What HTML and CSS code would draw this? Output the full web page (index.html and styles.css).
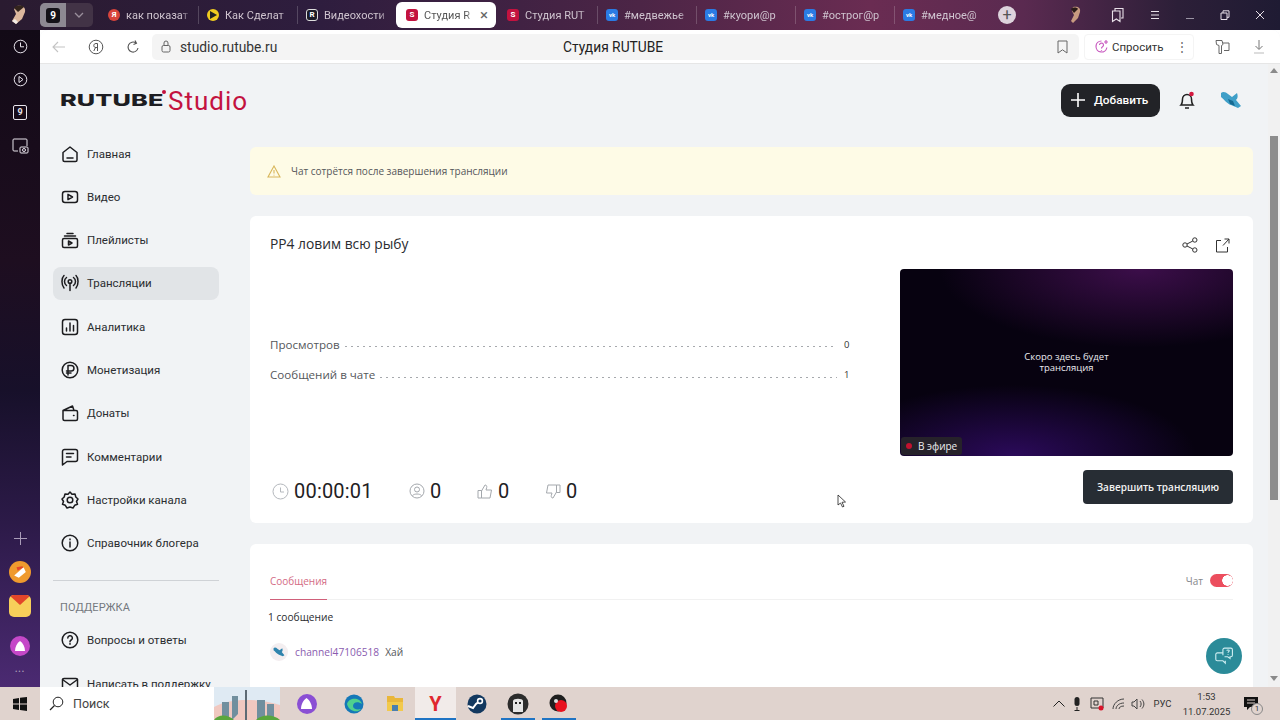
FILE: index.html
```html
<!DOCTYPE html>
<html lang="ru">
<head>
<meta charset="utf-8">
<title>Студия RUTUBE</title>
<link rel="stylesheet" href="styles.css">
</head>
<body>
<div class="desktop">
  <header class="tabbar">
    <div class="profile"><svg width="22" height="22" viewBox="0 0 22 22"><path d="M8 2c5-1 9 1 8 6l-3 7-6 5-4-3 4-7-2-5z" fill="#dcb79d"/><path d="M5 4c2-3 8-3 10-1l-6 5z" fill="#33241c"/><path d="M3 17l4 3 2-2-3-3z" fill="#f2ece6"/></svg></div>
    <div class="tabgroup"><span class="count"><b>9</b></span><svg class="chev" width="10" height="6" viewBox="0 0 10 6"><path d="M1 1l4 4 4-4" fill="none" stroke="#9a8f9c" stroke-width="1.3"/></svg></div>
    <div class="tab sep"><span class="fav round yandex">Я</span><span class="tabtext">как показат</span></div>
    <div class="tab sep"><span class="fav round yellow"><svg width="8" height="8" viewBox="0 0 8 8"><path d="M1 0l7 4-7 4z" fill="#222"/></svg></span><span class="tabtext">Как Сделат</span></div>
    <div class="tab"><span class="fav dark">R</span><span class="tabtext">Видеохости</span></div>
    <div class="tab active"><span class="fav crimson">S</span><span class="tabtext">Студия R</span><span class="close">×</span></div>
    <div class="tab sep"><span class="fav crimson">S</span><span class="tabtext">Студия RUT</span></div>
    <div class="tab sep"><span class="fav vk">vk</span><span class="tabtext">#медвежье</span></div>
    <div class="tab sep"><span class="fav vk">vk</span><span class="tabtext">#куори@р</span></div>
    <div class="tab sep"><span class="fav vk">vk</span><span class="tabtext">#острог@р</span></div>
    <div class="tab"><span class="fav vk">vk</span><span class="tabtext">#медное@</span></div>
    <div class="newtab">+</div>
    <div class="winctl">
      <svg width="18" height="18" viewBox="0 0 18 18"><path d="M5 1c4-1 8 0 7 5l-2 6-5 5-2-2 3-6-2-4z" fill="#c89b80"/><path d="M3 3c2-2 6-2 7 0l-4 4z" fill="#2a1c18"/></svg>
      <svg width="14" height="16" viewBox="0 0 14 16"><path d="M4 4V1.500h8V11h-2M1.500 4h7.500v10.500L5.300 12 1.500 14.500z" fill="none" stroke="#e8e0e8" stroke-width="1.100"/></svg>
      <svg width="10" height="10" viewBox="0 0 10 10"><path d="M1 1.500h8M1 5h8M1 8.500h8" stroke="#e8e0e8"/></svg>
      <svg width="10" height="10" viewBox="0 0 10 10"><path d="M1 8.500h8" stroke="#9a94a4"/></svg>
      <svg width="10" height="10" viewBox="0 0 10 10"><path d="M1 3h6v6.500H1zM3 3V.800h6v6.500H7" fill="none" stroke="#e8e0e8"/></svg>
      <svg width="10" height="10" viewBox="0 0 10 10"><path d="M1 1l8 8M9 1l-8 8" stroke="#e8e0e8"/></svg>
    </div>
  </header>

  <div class="middle">
    <nav class="rail">
      <div class="railtop">
        <svg width="15" height="15" viewBox="0 0 15 15"><circle cx="7.500" cy="7.500" r="6.300" fill="none" stroke="#e8e4ec"/><path d="M7.500 3.500v4.300H11" fill="none" stroke="#e8e4ec"/></svg>
        <svg width="15" height="15" viewBox="0 0 15 15"><circle cx="7.500" cy="7.500" r="6.300" fill="none" stroke="#e8e4ec"/><path d="M6 4.500l4 3-4 3z" fill="none" stroke="#e8e4ec"/></svg>
        <span class="railnine">9</span>
        <svg width="17" height="16" viewBox="0 0 17 16"><path d="M6 13H2a1 1 0 0 1-1-1V2a1 1 0 0 1 1-1h12a1 1 0 0 1 1 1v6" fill="none" stroke="#e8e4ec"/><rect x="8" y="9" width="8" height="6" rx="1" fill="none" stroke="#e8e4ec"/><circle cx="12" cy="12" r="1.500" fill="none" stroke="#e8e4ec"/></svg>
      </div>
      <div class="railbottom">
        <svg width="13" height="13" viewBox="0 0 13 13"><path d="M6.500 0v13M0 6.500h13" stroke="#a99cb8"/></svg>
        <span class="appicon orange"><svg width="14" height="14" viewBox="0 0 12 12"><path d="M1 9l8-7 2 4-6 5z" fill="#fff"/><path d="M3 2l5-1 1 1-5 3z" fill="#e2462a"/></svg></span>
        <span class="appicon mail"><svg width="22" height="12" viewBox="0 0 22 12"><path d="M0 0h22L11 10z" fill="#e2462a"/></svg></span>
        <span class="appicon alice"><svg width="10" height="10" viewBox="0 0 10 10"><path d="M5 0C8 2 10 6 10 10H0C0 6 2 2 5 0z" fill="#fff"/></svg></span>
        <span class="dots">•••</span>
      </div>
    </nav>

    <div class="window">
      <div class="toolbar">
        <svg class="tool" width="14" height="12" viewBox="0 0 14 12"><path d="M13 6H1.500M6 1L1 6l5 5" fill="none" stroke="#c4c4c4" stroke-width="1.100"/></svg>
        <svg class="tool" width="16" height="16" viewBox="0 0 16 16"><circle cx="8" cy="8" r="6.800" fill="none" stroke="#555"/><path d="M9.500 12V4.500H8C6.500 4.500 5.800 5.500 5.800 6.600S6.500 8.500 8 8.500h1.500M7.500 8.500L5.800 12" fill="none" stroke="#555"/></svg>
        <svg class="tool" width="14" height="14" viewBox="0 0 14 14"><path d="M12 8a5 5 0 1 1-2-5M9 .500l1.500 2.800L7.500 4.500" fill="none" stroke="#555" stroke-width="1.100"/></svg>
        <div class="address">
          <svg width="10" height="13" viewBox="0 0 10 13"><rect x="1" y="5.500" width="8" height="6.500" rx="1.500" fill="none" stroke="#666"/><path d="M3 5.500V3a2 2 0 0 1 4 0v2.500" fill="none" stroke="#666"/></svg>
          <span class="url">studio.rutube.ru</span>
          <span class="pagetitle">Студия RUTUBE</span>
          <svg width="11" height="14" viewBox="0 0 11 14"><path d="M1 1h9v12L5.500 9.800 1 13z" fill="none" stroke="#666"/></svg>
        </div>
        <div class="ask">
          <svg width="15" height="15" viewBox="0 0 15 15"><path d="M7.500 2a5.500 5.500 0 1 0 5.400 6.500M5.500 6a2 2 0 1 1 3 1.800c-.8.500-1 1-1 1.700M7.500 11v.800M12 1v4M10 3h4" fill="none" stroke="#c95bc0" stroke-width="1.200"/></svg>
          <span>Спросить</span><span class="kebab">⋮</span>
        </div>
        <svg class="tool toolright" width="15" height="16" viewBox="0 0 15 16"><path d="M1 1.500h6l1 4-1.500 1V14.500H4V6.500L1.500 5.500zM8 4h6v7.500H9" fill="none" stroke="#666"/></svg>
        <svg class="tool" width="12" height="15" viewBox="0 0 12 15"><path d="M6 1v9M2.500 7L6 10.500 9.500 7" fill="none" stroke="#777"/><path d="M1 14h10" stroke="#bbb"/></svg>
      </div>

      <div class="viewport">
        <div class="page">
          <div class="pagehead">
            <div class="logo"><span class="logo-r">RUTUBE</span><i class="logo-dot"></i><span class="logo-s">Studio</span></div>
            <div class="headright">
              <button class="addbtn"><svg width="14" height="14" viewBox="0 0 14 14"><path d="M7 0v14M0 7h14" stroke="#fff" stroke-width="1.600"/></svg>Добавить</button>
              <span class="bell"><svg width="18" height="19" viewBox="0 0 18 19"><path d="M3 14c1.500-1.500 1.500-3 1.500-6a4.500 4.500 0 0 1 9 0c0 3 0 4.500 1.500 6zM7 17h4" fill="none" stroke="#222" stroke-width="1.500"/><circle cx="13.500" cy="3" r="2.300" fill="#d4183f"/></svg></span>
              <svg class="bird" width="22" height="18" viewBox="0 0 22 18"><path d="M1 2c2-2 5-1 7 1l4 3 5-4c1 3 1 5-1 7l5 6-3 2-7-3C7 13 4 8 1 6z" fill="#3f9fc8"/><path d="M8 8l5 2 2 5-5-2z" fill="#166a92"/></svg>
            </div>
          </div>

          <div class="pagebody">
            <aside class="sidebar">
              <a class="navitem"><svg viewBox="0 0 18 18"><path d="M2 7.500L9 2l7 5.500V15a1.500 1.500 0 0 1-1.500 1.500h-11A1.500 1.500 0 0 1 2 15zM6 13h6"/></svg>Главная</a>
              <a class="navitem"><svg viewBox="0 0 18 18"><rect x="1.500" y="3.500" width="15" height="11" rx="2.500"/><path d="M7 6.300l4.500 2.700L7 11.700z"/></svg>Видео</a>
              <a class="navitem"><svg viewBox="0 0 18 18"><rect x="1.500" y="7.500" width="15" height="9" rx="1.500"/><path d="M3.500 5h11M6 2.500h6M7.500 10l3.500 2-3.500 2z"/></svg>Плейлисты</a>
              <a class="navitem current"><svg viewBox="0 0 18 18"><circle cx="9" cy="7.500" r="1.800"/><path d="M9 9.500v7M5.500 11.500a5 5 0 0 1 0-8M12.500 3.500a5 5 0 0 1 0 8M3 14C.300 11 .300 4 3 1.500M15 1.500c2.700 2.500 2.700 9.500 0 12.500"/></svg>Трансляции</a>
              <a class="navitem"><svg viewBox="0 0 18 18"><rect x="1.500" y="1.500" width="15" height="15" rx="2.500"/><path d="M5.500 13v-3M9 13V5M12.500 13V7.500"/></svg>Аналитика</a>
              <a class="navitem"><svg viewBox="0 0 18 18"><circle cx="9" cy="9" r="7.800"/><path d="M7 14V4.500h3.200a2.700 2.700 0 0 1 0 5.500H5.500M5.500 12H10"/></svg>Монетизация</a>
              <a class="navitem"><svg viewBox="0 0 18 18"><path d="M2 6.500h13a1.500 1.500 0 0 1 1.500 1.500v7a1.500 1.500 0 0 1-1.500 1.500H3.500A1.500 1.500 0 0 1 2 15zM2 6.500L11.500 2l1.500 4.500M12.500 11.500h.5"/></svg>Донаты</a>
              <a class="navitem"><svg viewBox="0 0 18 18"><path d="M3.500 1.500h11a2 2 0 0 1 2 2v8a2 2 0 0 1-2 2H6L1.500 17V3.500a2 2 0 0 1 2-2zM5.500 5.500h7M5.500 9h4.500"/></svg>Комментарии</a>
              <a class="navitem"><svg viewBox="0 0 18 18"><path d="M9 1l2 2.300 3-.3.800 3L17 8l-1.500 2.500 1 2.800-2.800 1L12 17l-3-1-3 1-1.700-2.700-2.800-1 1-2.800L1 8l2.200-2 .8-3 3 .3z"/><circle cx="9" cy="9" r="2.800"/></svg>Настройки канала</a>
              <a class="navitem"><svg viewBox="0 0 18 18"><circle cx="9" cy="9" r="7.800"/><path d="M9 8v5M9 5v.8"/></svg>Справочник блогера</a>
              <hr class="navline">
              <div class="navhead">ПОДДЕРЖКА</div>
              <a class="navitem"><svg viewBox="0 0 18 18"><circle cx="9" cy="9" r="7.800"/><path d="M6.800 7a2.300 2.300 0 1 1 3.400 2c-.8.500-1.200 1-1.200 1.800M9 12.500v.8"/></svg>Вопросы и ответы</a>
              <a class="navitem"><svg viewBox="0 0 18 18"><rect x="1.500" y="3.500" width="15" height="11" rx="1.500"/><path d="M1.500 4.500L9 10l7.500-5.500"/></svg>Написать в поддержку</a>
            </aside>

            <main class="content">
              <div class="notice">
                <svg width="14" height="13" viewBox="0 0 14 13"><path d="M7 1l6 11H1zM7 5v3.500M7 9.800v.6" fill="none" stroke="#d8b65a" stroke-width="1.100"/></svg>
                <span>Чат сотрётся после завершения трансляции</span>
              </div>

              <section class="card stream">
                <h1 class="title">РР4 ловим всю рыбу</h1>
                <div class="actions">
                  <svg width="16" height="16" viewBox="0 0 16 16"><g fill="none" stroke="#333"><circle cx="3" cy="8" r="2.200"/><circle cx="12.800" cy="3" r="2.200"/><circle cx="12.800" cy="13" r="2.200"/><path d="M5 7l5.800-3M5 9l5.800 3"/></g></svg>
                  <svg width="15" height="15" viewBox="0 0 15 15"><path d="M6 2.500H1.500v11.500h11V9M8 7.500L14 1M9.500 1H14v4.500" fill="none" stroke="#333"/></svg>
                </div>
                <div class="stats">
                  <div class="statrow"><span>Просмотров</span><i class="leader"></i><b>0</b></div>
                  <div class="statrow"><span>Сообщений в чате</span><i class="leader"></i><b>1</b></div>
                </div>
                <div class="preview">
                  <p>Скоро здесь будет<br>трансляция</p>
                  <span class="live"><i></i>В эфире</span>
                </div>
                <div class="metrics">
                  <span class="metric timer"><svg width="17" height="17" viewBox="0 0 17 17"><circle cx="8.500" cy="8.500" r="7.500" fill="none" stroke="#b4b8bd"/><path d="M8.500 4.500v4.500H12" fill="none" stroke="#b4b8bd"/></svg>00:00:01</span>
                  <span class="metric viewers"><svg width="16" height="16" viewBox="0 0 16 16"><g fill="none" stroke="#a4a8ad"><circle cx="8" cy="8" r="7"/><circle cx="8" cy="6.500" r="2.500"/><path d="M3.500 12.500c2-2 7-2 9 0"/></g></svg>0</span>
                  <span class="metric likes"><svg width="16" height="15" viewBox="0 0 16 15"><path d="M1 6.500h3.500V14H1zM4.500 7L8 1c1.500 0 2 1 1.700 2.500L9 6h5.500l-1.500 8H4.500" fill="none" stroke="#a4a8ad"/></svg>0</span>
                  <span class="metric dislikes"><svg width="16" height="15" viewBox="0 0 16 15"><path d="M15 8.500h-3.500V1H15zM11.500 8L8 14c-1.500 0-2-1-1.700-2.500L7 9H1.500L3 1h8.500" fill="none" stroke="#a4a8ad"/></svg>0</span>
                </div>
                <button class="endbtn">Завершить трансляцию</button>
              </section>

              <section class="card chat">
                <div class="chathead">
                  <span class="chattab">Сообщения</span>
                  <span class="chatlabel">Чат<i class="toggle"></i></span>
                </div>
                <div class="chatcount">1 сообщение</div>
                <div class="message">
                  <span class="avatar"><svg width="12" height="10" viewBox="0 0 22 18"><path d="M1 2c2-2 5-1 7 1l4 3 5-4c1 3 1 5-1 7l5 6-3 2-7-3C7 13 4 8 1 6z" fill="#2f84ad"/></svg></span>
                  <span class="author">channel47106518</span>
                  <span class="msgtext">Хай</span>
                </div>
              </section>
            </main>
          </div>
        </div>

        <div class="scrollbar">
          <i class="arrow up"></i>
          <i class="thumb"></i>
          <i class="arrow down"></i>
        </div>

        <button class="helpbtn" aria-label="Помощь"><svg width="19" height="18" viewBox="0 0 24 22"><g fill="none" stroke="#cfeef2" stroke-width="1.400"><path d="M10 7H3a2 2 0 0 0-2 2v6a2 2 0 0 0 2 2h7l3 3v-3"/><path d="M10 10V3a2 2 0 0 1 2-2h8a2 2 0 0 1 2 2v7a2 2 0 0 1-2 2h-1v2l-3-2h-4"/><path d="M15 4.500c0-1.500 3-1.500 3 0 0 1-1.500 1.200-1.500 2.500M16.500 8.500v.8"/></g></svg></button>
        <svg class="cursor" width="10" height="14" viewBox="0 0 10 14"><path d="M1 1v10l2.500-2L5.500 13l1.500-.7-2-4 3.500-.3z" fill="#fff" stroke="#222" stroke-width=".8"/></svg>
      </div>
    </div>
  </div>

  <footer class="taskbar">
    <div class="start"><svg width="14" height="14" viewBox="0 0 14 14"><path d="M0 2l6-1v5.500H0zM7 .8L14 0v6.500H7zM0 7.500h6V13l-6-1zM7 7.500h7V14l-7-1z" fill="#111"/></svg></div>
    <div class="search">
      <svg width="15" height="15" viewBox="0 0 15 15"><circle cx="9" cy="6" r="4.800" fill="none" stroke="#222"/><path d="M5.500 9.500L1 14" stroke="#222" stroke-width="1.200"/></svg>
      <span>Поиск</span>
      <svg class="city" width="66" height="33" viewBox="0 0 66 33"><rect width="66" height="33" fill="#dfeaf3"/><path d="M0 33V20c14-8 40-10 66-2v15z" fill="#f0c8c0"/><path d="M8 33V15h7v18zM18 33V9h6v18zM43 33V13h8v20zM53 33V17h7v16z" fill="#718f9e"/><path d="M31 33V3h2v30z" fill="#5d6a74"/><path d="M0 33c4-6 14-6 20 0zM42 33c5-6 18-6 24 0z" fill="#5aa63c"/></svg>
    </div>
    <div class="apps">
      <span class="app"><span class="tb alice2"><svg width="11" height="11" viewBox="0 0 10 10"><path d="M5 0C8 2 10 6 10 10H0C0 6 2 2 5 0z" fill="#fff"/></svg></span></span>
      <span class="app shifted"><svg width="20" height="20" viewBox="0 0 20 20"><circle cx="10" cy="10" r="9.500" fill="#1578b8"/><path d="M3 10c2-7 13-7 15 0-4-3-9-2-9 2 0 3 4 4 8 3-3 4-12 3-14-5z" fill="#4fd08e"/></svg></span>
      <span class="app"><svg width="18" height="17" viewBox="0 0 18 17"><path d="M1 1h7l1 2h8v5H1z" fill="#e9b63a"/><path d="M1 7h16v9H1z" fill="#f2c94c"/><path d="M6 10h6v6H6z" fill="#4a7fb0"/></svg></span>
      <span class="app open active"><span class="ya">Y</span></span>
      <span class="app"><svg width="20" height="20" viewBox="0 0 20 20"><circle cx="10" cy="10" r="9.500" fill="#12385f"/><path d="M1 12l5 2 3-4 4-3" stroke="#fff" stroke-width="2" fill="none"/><circle cx="13" cy="7" r="3.200" fill="#fff"/><circle cx="13" cy="7" r="1.600" fill="#12385f"/></svg></span>
      <span class="app open"><svg width="22" height="22" viewBox="0 0 22 22"><circle cx="11" cy="11" r="10.500" fill="#2c2c2c"/><path d="M6 19V8c0-3 10-3 10 0v11z" fill="#e6e6e6"/><path d="M8 9h2v2H8zM12 9h2v2h-2z" fill="#222"/></svg></span>
      <span class="app open"><svg width="22" height="22" viewBox="0 0 22 22"><circle cx="10" cy="10" r="8.500" fill="#1e1e1e"/><circle cx="13" cy="13" r="6" fill="#e8121e"/><circle cx="8" cy="8" r="2" fill="#ddd"/></svg></span>
    </div>
    <div class="tray">
      <svg width="12" height="7" viewBox="0 0 12 7"><path d="M.5 6.500L6 1l5.500 5.500" fill="none" stroke="#222"/></svg>
      <svg width="8" height="14" viewBox="0 0 8 14"><rect x="1.500" width="5" height="9" rx="2.500" fill="#222"/><path d="M4 10v4M1.500 13.500h5" stroke="#222"/></svg>
      <svg width="14" height="14" viewBox="0 0 14 14"><path d="M1 1h12v10H1z" fill="none" stroke="#333"/><path d="M4 4h4v4H4z" fill="none" stroke="#333"/><circle cx="11" cy="11" r="2.500" fill="#d9142a"/></svg>
      <svg width="13" height="12" viewBox="0 0 13 12"><path d="M1 11C1 6 6 1 12 1M4 11c0-3 3-6 8-6M7 11c0-1.500 1.500-3 5-3" fill="none" stroke="#444"/></svg>
      <svg class="speaker" width="14" height="12" viewBox="0 0 14 12"><path d="M1 4h2l3-3v10L3 8H1zM9 3c1.500 2 1.500 4 0 6M11 1.500c2.500 3 2.500 6 0 9" fill="none" stroke="#444"/></svg>
      <span class="lang">РУС</span>
      <span class="clock">1:53<br>11.07.2025</span>
      <span class="notif"><svg width="14" height="13" viewBox="0 0 14 13"><path d="M0 0h14v10H6l-3 3v-3H0z" fill="#111"/><path d="M3 3h8M3 6h8" stroke="#e0d3ce"/></svg><i>1</i></span>
    </div>
  </footer>
</div>
</body>
</html>
```

FILE: styles.css
```css
* { box-sizing: border-box; }
html, body { margin: 0; height: 100%; overflow: hidden; }
body { font-family: "Roboto", "Liberation Sans", sans-serif; color: #222; }
button { font: inherit; border: 0; padding: 0; }
a { color: inherit; }

.desktop { width: 1280px; height: 720px; display: flex; flex-direction: column; }

/* tab strip */
.tabbar {
  height: 30px; flex: none; display: flex; align-items: center;
  background: linear-gradient(90deg, #2a1b30 0%, #2e1d3e 25%, #4c2546 50%, #6a2c52 68%, #5a2a50 80%, #2c1f38 92%, #1f1b33 100%);
  color: #cfc4cf; font-size: 11px;
}
.profile { width: 40px; display: flex; justify-content: center; }
.tabgroup { width: 53px; height: 24px; margin-right: 7px; display: flex; align-items: center; border-radius: 5px; background: #423346; overflow: hidden; }
.count { width: 26px; height: 24px; background: #8d8992; display: flex; align-items: center; justify-content: center; }
.count b { width: 14px; height: 15px; border-radius: 3px; background: #141218; color: #fff; font-size: 10px; line-height: 15px; text-align: center; }
.chev { margin-left: 8px; }
.tab { width: 99px; height: 27px; padding: 0 8px 0 8px; display: flex; align-items: center; gap: 6px; white-space: nowrap; overflow: hidden; }
.tab.sep { background: linear-gradient(#ffffff30, #ffffff30) right center / 1px 18px no-repeat; }
.tab.active { background: #fff; color: #555; height: 26px; width: 100px; margin: 0 3px 0 -1px; padding-left: 10px; border-radius: 6px; }
.tabtext { flex: 1; overflow: hidden; font-family: "Roboto", sans-serif; font-size: 11px; -webkit-mask-image: linear-gradient(90deg, #000 85%, transparent); mask-image: linear-gradient(90deg, #000 85%, transparent); }
.close { color: #666; font-size: 15px; line-height: 1; }
.fav { flex: none; width: 12px; height: 12px; border-radius: 3px; display: flex; align-items: center; justify-content: center; color: #fff; font-size: 8px; font-weight: 700; line-height: 1; }
.fav.round { border-radius: 50%; }
.yandex { background: #d8443c; }
.yellow { background: #f0cc20; }
.dark { background: #1c1c28; border: 1px solid #ddd; }
.crimson { background: #c3123f; }
.vk { background: #2a7be4; font-size: 6px; }
.newtab { width: 18px; height: 18px; margin-left: 4px; border-radius: 50%; background: #ddd3dc; color: #555; font-size: 16px; line-height: 17px; text-align: center; }
.winctl { margin-left: auto; width: 212px; padding-right: 15px; display: flex; align-items: center; justify-content: space-between; }

/* layout */
.middle { flex: 1; min-height: 0; display: flex; }
.rail {
  width: 40px; flex: none; display: flex; flex-direction: column; justify-content: space-between; align-items: center;
  background: linear-gradient(180deg, #120a16 0%, #1e0e20 35%, #17102a 55%, #2c1a48 75%, #4b2a72 100%);
  padding: 9px 0 11px;
}
.railtop { display: flex; flex-direction: column; align-items: center; gap: 18px; }
.railnine { width: 14px; height: 15px; border: 1px solid #e8e4ec; border-radius: 2px; color: #e8e4ec; font-size: 9px; font-weight: 700; text-align: center; line-height: 13px; }
.railbottom { display: flex; flex-direction: column; align-items: center; }
.appicon { display: flex; align-items: center; justify-content: center; }
.orange { width: 22px; height: 22px; margin-top: 16px; border-radius: 50%; background: #ef9a2e; }
.mail { width: 22px; height: 22px; margin-top: 12px; border-radius: 5px; background: #f7cf5a; align-items: flex-start; overflow: hidden; }
.alice { width: 20px; height: 20px; margin-top: 19px; border-radius: 50%; background: #c548c8; }
.dots { color: #a99cb8; font-size: 7px; letter-spacing: 1px; line-height: 8px; margin-top: 12px; }

.window { flex: 1; min-width: 0; display: flex; flex-direction: column; background: #f1f3f5; border-radius: 8px 8px 0 0; overflow: hidden; }
.toolbar { height: 34px; flex: none; display: flex; align-items: center; background: #fff; border-bottom: 1px solid #e6e6e6; padding-left: 12px; }
.tool { flex: none; margin-right: 22px; }
.toolright { margin-left: 21px; margin-right: 23px; }
.address { flex: none; width: 927px; height: 26px; margin-left: -10px; padding: 0 11px 0 9px; background: #f4f4f4; border-radius: 5px; display: flex; align-items: center; font-family: "Roboto", sans-serif; font-size: 13.800px; color: #333; }
.url { margin-left: 9px; width: 383px; }
.pagetitle { flex: 1; color: #222; }
.ask { flex: none; width: 110px; height: 26px; margin-left: 5px; padding-left: 9px; display: flex; align-items: center; gap: 3px; font-size: 11.500px; color: #333; border: 1px solid #f4f4f4; border-radius: 4px; }
.kebab { margin-left: 9px; color: #666; }

.viewport { flex: 1; min-height: 0; display: flex; position: relative; overflow: hidden; }
.page { flex: 1; min-width: 0; overflow: hidden; }
.scrollbar { width: 12px; flex: none; display: flex; flex-direction: column; align-items: center; background: #f1f1f1; }
.thumb { width: 8px; height: 364px; margin-top: 63px; background: #8d8d8d; }
.arrow { width: 0; height: 0; border-left: 4px solid transparent; border-right: 4px solid transparent; }
.arrow.up { border-bottom: 5px solid #8a8a8a; margin-top: 4px; }
.arrow.down { border-top: 5px solid #8a8a8a; margin-top: auto; margin-bottom: 6px; }

/* page header */
.pagehead { height: 72px; display: flex; align-items: center; justify-content: space-between; padding: 0 26px 0 20px; }
.logo { display: flex; align-items: center; }
.logo-r { width: 102px; font-family: "Inter", sans-serif; font-weight: 800; font-size: 19px; line-height: 20px; letter-spacing: .1px; color: #1d1d22; display: inline-block; transform: translateY(1px) scale(1.330, .860); transform-origin: left center; white-space: nowrap; }
.logo-dot { width: 4px; height: 4px; border-radius: 50%; background: #c3123f; align-self: flex-start; margin: 5px 2px 0 0; }
.logo-s { font-family: "Roboto", sans-serif; font-weight: 400; font-size: 26px; line-height: 28px; letter-spacing: 1px; color: #c3123f; padding-top: 2px; }
.headright { display: flex; align-items: center; }
.addbtn { width: 99px; height: 33px; padding-left: 10px; border-radius: 9px; background: #222327; color: #fff; display: flex; align-items: center; gap: 9px; font-size: 11.800px; font-weight: 500; }
.bell { margin: 0 24px 0 18px; display: flex; }
.bird { flex: none; }

/* sidebar */
.pagebody { display: flex; align-items: flex-start; }
.sidebar { width: 210px; flex: none; padding: 1px 31px 0 13px; }
.navitem { height: 33px; margin-bottom: 10.330px; padding-left: 8px; display: flex; align-items: center; gap: 8px; border-radius: 8px; font-size: 11.500px; color: #2b2d30; white-space: nowrap; }
.navitem svg { width: 18px; height: 18px; flex: none; fill: none; stroke: #1c1c1f; stroke-width: 1.500; stroke-linecap: round; stroke-linejoin: round; }
.navitem.current { background: #e1e4e7; }
.navline { margin: 20px 0 0; border: 0; border-top: 1px solid #cfd2d6; }
.navhead { margin: 20px 0 0 7px; height: 23px; font-size: 11px; letter-spacing: .1px; color: #74787e; }

/* content */
.content { width: 1003px; flex: none; padding-top: 11px; font-family: "Open Sans", sans-serif; }
.notice { height: 48px; padding-left: 17px; display: flex; align-items: center; gap: 10px; background: #fefbe6; border-radius: 6px; font-size: 10px; color: #55565a; }
.card { background: #fff; border-radius: 6px; }
.stream { margin-top: 21px; height: 307px; padding: 20px; display: grid; grid-template-columns: 580px 333px; column-gap: 50px; grid-template-rows: 33px 187px 1fr; align-items: start; }
.title { margin: 0; padding-bottom: 2px; font-size: 13.800px; line-height: 16px; font-weight: 500; color: #2a2c30; }
.actions { justify-self: end; display: flex; gap: 17px; align-items: center; padding: 1px 3px 0 0; }
.stats { align-self: center; display: flex; flex-direction: column; gap: 12.500px; font-size: 11.600px; color: #55575b; margin-top: -6px; }
.statrow { display: flex; align-items: center; height: 18px; }
.statrow b { width: 13px; padding-left: 7px; font-size: 9.500px; font-weight: 500; color: #333; }
.leader { flex: 1; height: 8px; margin: 0 0 0 3px; background-image: radial-gradient(circle, #a6a9ad .55px, transparent 1px); background-size: 6px 3px; background-repeat: repeat-x; background-position: left 5px; }
.preview { width: 333px; height: 187px; position: relative; display: flex; align-items: center; justify-content: center; border-radius: 4px; overflow: hidden; background:
    radial-gradient(ellipse 60% 42% at 72% 0%, #3c0e4a 0%, transparent 100%),
    radial-gradient(ellipse 55% 38% at 34% 100%, #2b0a5a 0%, transparent 100%),
    #070210; }
.preview p { margin: -2px 0 0; color: #ececf0; font-size: 9.500px; line-height: 11px; text-align: center; }
.live { position: absolute; left: 1px; bottom: 1px; height: 18px; padding: 0 5px; display: flex; align-items: center; gap: 6px; background: #26222a; border-radius: 3px; color: #eee; font-size: 10px; }
.live i { width: 6px; height: 6px; border-radius: 50%; background: #c1122f; }
.metrics { align-self: center; margin-top: 18px; height: 34px; display: flex; align-items: center; font-family: "Roboto", sans-serif; font-size: 20px; color: #1f2124; }
.metric { display: flex; align-items: center; gap: 5px; }
.timer { margin-left: 2px; width: 137px; gap: 5px; letter-spacing: .2px; white-space: nowrap; }
.viewers { width: 68px; }
.likes { width: 68px; }
.endbtn { justify-self: end; margin-top: 14px; width: 150px; height: 34px; border-radius: 4px; background: #272d34; color: #f2f2f2; font-family: "Open Sans", sans-serif; font-size: 10px; font-weight: 600; }

.chat { margin-top: 21px; height: 160px; padding: 0 20px; }
.chathead { height: 56px; display: flex; align-items: flex-end; justify-content: space-between; border-bottom: 1px solid #f1f1f1; }
.chattab { height: 35px; width: 57px; font-size: 10px; line-height: 32px; color: #d36b84; border-bottom: 1px solid #d0607a; margin-bottom: -1px; white-space: nowrap; }
.chatlabel { height: 35px; display: flex; align-items: flex-start; padding-top: 10px; gap: 7px; font-size: 10px; color: #85878b; line-height: 14px; }
.toggle { width: 23px; height: 13px; display: block; border-radius: 7px; background: #ec4e5e radial-gradient(circle at 17.500px 6.500px, #fff 5px, transparent 5.500px); }
.chatcount { margin: 9px 0 0 -2px; font-size: 10.200px; line-height: 16px; font-weight: 500; color: #2a2c30; }
.message { margin-top: 15px; height: 24px; display: flex; align-items: center; font-size: 10.200px; }
.avatar { width: 18px; height: 18px; margin-right: 7px; border-radius: 50%; background: #f3eef0; display: flex; align-items: center; justify-content: center; }
.author { color: #8a5cb0; margin-right: 6px; }
.msgtext { color: #55575b; }

.helpbtn { position: absolute; right: 38px; bottom: 13px; width: 36px; height: 36px; border-radius: 50%; background: #2b8b99; display: flex; align-items: center; justify-content: center; }
.cursor { position: absolute; left: 797px; top: 430px; }

/* taskbar */
.taskbar { height: 33px; flex: none; display: flex; align-items: center; background: #e0d3ce; font-family: "Roboto", sans-serif; color: #222; }
.start { width: 40px; display: flex; justify-content: center; }
.search { width: 240px; height: 33px; padding-left: 9px; display: flex; align-items: center; gap: 9px; background: #fff; font-size: 12.500px; color: #444; }
.city { margin-left: auto; }
.apps { display: flex; align-items: stretch; height: 33px; margin-left: 6px; }
.app { width: 41px; display: flex; align-items: center; justify-content: center; }
.app.shifted { margin-left: 6px; }
.app.open { background: linear-gradient(#1f74c4, #1f74c4) center bottom / 34px 2px no-repeat; }
.app.open.active { background: linear-gradient(#1f74c4, #1f74c4) center bottom / 100% 2px no-repeat, #f1ebe9; }
.tb { width: 20px; height: 20px; border-radius: 50%; display: flex; align-items: center; justify-content: center; }
.alice2 { background: #8a4fd4; }
.ya { color: #e0272e; font-size: 20px; font-weight: 700; line-height: 1; }
.tray { margin-left: auto; padding-right: 18px; display: flex; align-items: center; gap: 8.500px; color: #333; font-size: 9.500px; }
.speaker { margin-left: -3px; }
.lang { margin-left: -3.500px; width: 26px; text-align: center; }
.clock { width: 56px; margin: 0 1px 0 -5.500px; text-align: center; line-height: 15px; }
.notif { position: relative; display: flex; width: 18px; }
.notif i { position: absolute; left: 7px; top: 6px; width: 12px; height: 12px; border: 1px solid #888; border-radius: 50%; font-style: normal; font-size: 8px; line-height: 10px; text-align: center; background: #e0d3ce; }
```
